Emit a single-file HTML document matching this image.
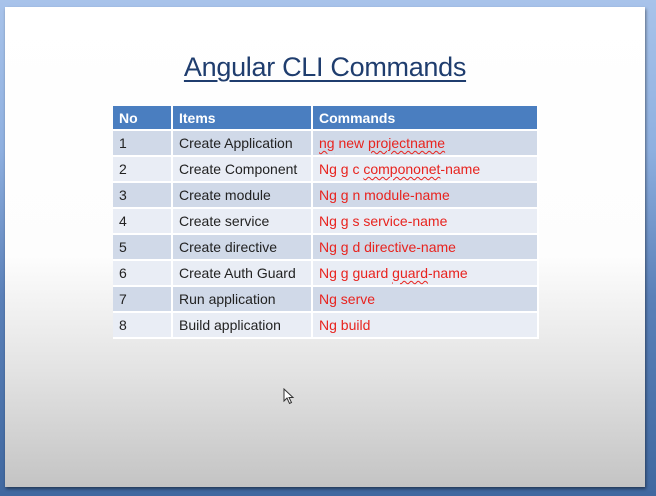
<!DOCTYPE html>
<html><head><style>
html,body{margin:0;padding:0;}
body{width:656px;height:496px;overflow:hidden;background:linear-gradient(to bottom,#a8c3ea 0%,#8fb0e0 30%,#5a80b8 60%,#4068a0 100%);position:relative;font-family:"Liberation Sans",sans-serif;}
.slide{position:absolute;left:5px;top:7px;width:640px;height:480px;background:linear-gradient(to bottom,#ffffff 0%,#fdfdfd 52%,#e4e4e4 75%,#c4c4c4 100%);box-shadow:1px 2px 3px rgba(0,0,0,0.45);}
.title{position:absolute;left:0;width:650px;top:52px;text-align:center;font-size:27px;color:#1f3d6e;text-decoration:underline;text-decoration-thickness:2px;text-underline-offset:4px;letter-spacing:-0.3px;}
table{position:absolute;left:113px;top:106px;border-collapse:collapse;width:426px;font-size:14px;}
td,th{height:24px;padding:0 0 0 6px;text-align:left;border-right:2px solid #fff;border-bottom:2px solid #fff;white-space:nowrap;}
th{background:#4a7ec0;color:#fff;font-weight:bold;height:23px;border-bottom:2px solid #fff;}
tr.o td{background:#d0d9e8;}
tr.e td{background:#e9edf5;}
td{color:#222;}
td.c{color:#e8231e;}
.w{text-decoration:underline wavy #e8231e;text-decoration-thickness:1px;text-underline-offset:2px;}
</style></head><body>
<div class="slide"></div>
<div class="title">Angular CLI Commands</div>
<table>
<tr><th style="width:52px">No</th><th style="width:132px">Items</th><th>Commands</th></tr>
<tr class="o"><td>1</td><td>Create Application</td><td class="c"><span class="w">ng</span> new <span class="w">projectname</span></td></tr>
<tr class="e"><td>2</td><td>Create Component</td><td class="c">Ng g c <span class="w">compononet</span>-name</td></tr>
<tr class="o"><td>3</td><td>Create module</td><td class="c">Ng g n module-name</td></tr>
<tr class="e"><td>4</td><td>Create service</td><td class="c">Ng g s service-name</td></tr>
<tr class="o"><td>5</td><td>Create directive</td><td class="c">Ng g d directive-name</td></tr>
<tr class="e"><td>6</td><td>Create Auth Guard</td><td class="c">Ng g guard <span class="w">guard</span>-name</td></tr>
<tr class="o"><td>7</td><td>Run application</td><td class="c">Ng serve</td></tr>
<tr class="e"><td>8</td><td>Build application</td><td class="c">Ng build</td></tr>
</table>
<svg style="position:absolute;left:283px;top:388px" width="12" height="18" viewBox="0 0 12 18"><path d="M1 1 L1 13 L4 10 L6.5 15.5 L8.5 14.5 L6 9.5 L10 9.5 Z" fill="#fff" stroke="#333" stroke-width="1"/></svg>
</body></html>
